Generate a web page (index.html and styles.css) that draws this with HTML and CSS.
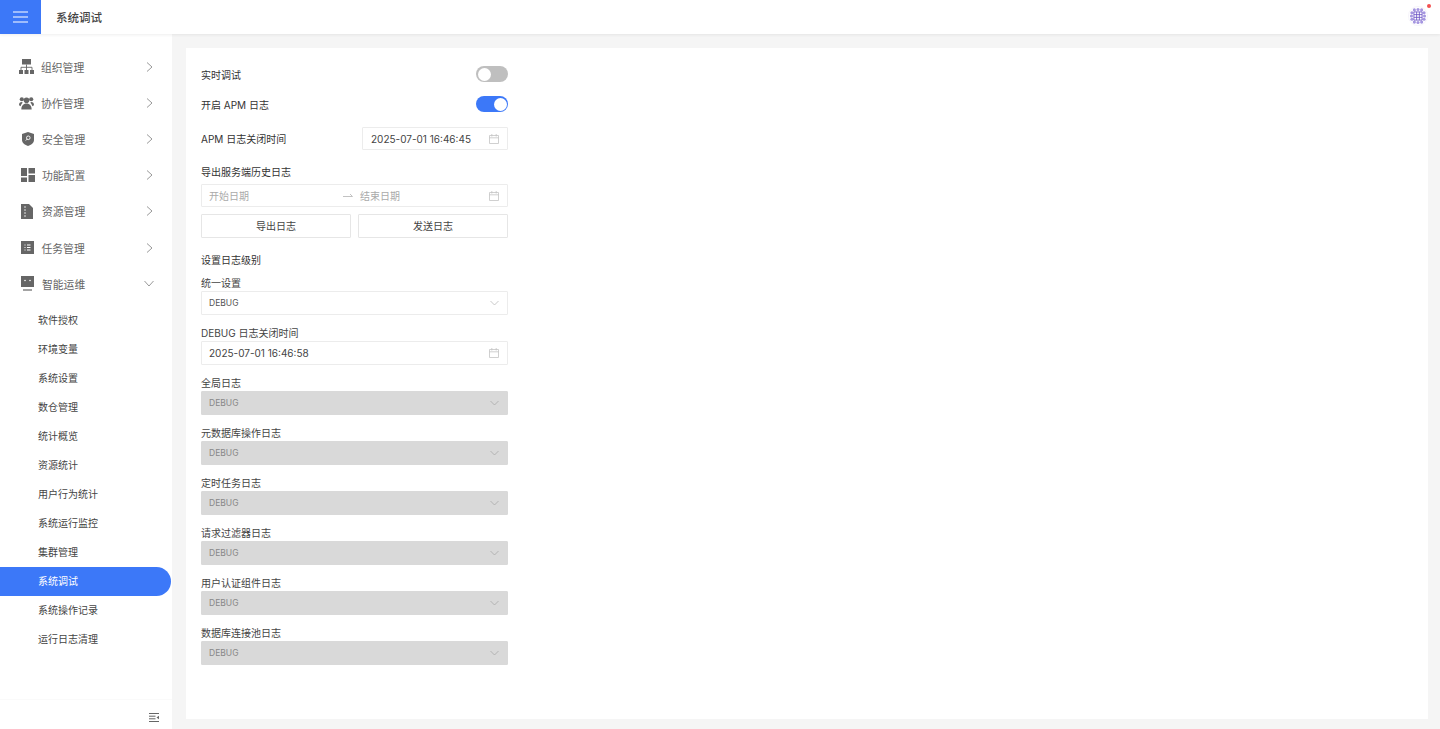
FILE: index.html
```html
<!DOCTYPE html>
<html lang="zh-CN">
<head>
<meta charset="utf-8">
<title>系统调试</title>
<link rel="stylesheet" href="styles.css">
</head>
<body>
<header class="topbar">
  <button class="menu-btn" aria-label="菜单"><svg width="15" height="12" viewBox="0 0 15 12"><path d="M0 1h15M0 6h15M0 11h15" stroke="#fff" stroke-width="1.200"/></svg></button>
  <div class="page-title">系统调试</div>
  <div class="avatar">
    <svg width="20" height="20" viewBox="0 0 22 22">
      <circle cx="11" cy="11" r="10.500" fill="#fff" stroke="#eeeaf6" stroke-width=".6"/>
      <g fill="#a596e0">
        <circle cx="7" cy="4.300" r="1.700"/><circle cx="11" cy="3.800" r="1.700"/><circle cx="15" cy="4.300" r="1.700"/>
        <circle cx="7" cy="17.700" r="1.700"/><circle cx="11" cy="18.200" r="1.700"/><circle cx="15" cy="17.700" r="1.700"/>
        <circle cx="4.300" cy="7.500" r="1.700"/><circle cx="3.800" cy="11" r="1.700"/><circle cx="4.300" cy="14.500" r="1.700"/>
        <circle cx="17.700" cy="7.500" r="1.700"/><circle cx="18.200" cy="11" r="1.700"/><circle cx="17.700" cy="14.500" r="1.700"/>
      </g>
      <path d="M6.500 6.500h9v9h-9z" fill="#fff"/>
      <path d="M6.500 6.500h9v9h-9zM9.500 6.500v9M12.500 6.500v9M6.500 9.500h9M6.500 12.500h9" fill="none" stroke="#6a52c4" stroke-width=".9"/>
    </svg>
    <span class="dot"></span>
  </div>
</header>
<div class="layout">
  <aside class="sidebar">
    <nav class="nav">
      <div class="nav-item"><svg class="ico" width="15" height="15" viewBox="0 0 15 15"><path d="M3 0h9v5.500H3zM0 11h4v4H0zM5.500 11h4v4h-4zM11 11h4v4h-4z" fill="#666"/><path d="M7.500 5.500V11M2 11V8.300h11V11" fill="none" stroke="#666" stroke-width=".9"/></svg><span>组织管理</span><svg class="chev" width="7" height="10" viewBox="0 0 7 10"><path d="M1 .5 6 5 1 9.500" fill="none" stroke="#999"/></svg></div>
      <div class="nav-item"><svg class="ico" width="15" height="14" viewBox="0 0 16 14"><circle cx="8" cy="4" r="3" fill="#666"/><circle cx="3" cy="3" r="2.200" fill="#666"/><circle cx="13" cy="3" r="2.200" fill="#666"/><path d="M2.500 14c0-4 2-6.500 5.500-6.500s5.500 2.500 5.500 6.500zM0 9.500C0 7 1 6 3 6l1 .8C2.700 8 2 9 1.800 10.500zM16 9.500C16 7 15 6 13 6l-1 .8c1.300 1.200 2 2.200 2.200 3.700z" fill="#666"/></svg><span>协作管理</span><svg class="chev" width="7" height="10" viewBox="0 0 7 10"><path d="M1 .5 6 5 1 9.500" fill="none" stroke="#999"/></svg></div>
      <div class="nav-item"><svg class="ico ico-shield" width="12" height="14" viewBox="0 0 12 14"><path d="M6 0 12 2v6c0 3-3 5-6 6-3-1-6-3-6-6V2z" fill="#666"/><circle cx="6.300" cy="5.800" r="1.800" fill="none" stroke="#fff" stroke-width=".9"/><path d="M5 7.200 3.800 8.500" stroke="#fff"/></svg><span>安全管理</span><svg class="chev" width="7" height="10" viewBox="0 0 7 10"><path d="M1 .5 6 5 1 9.500" fill="none" stroke="#999"/></svg></div>
      <div class="nav-item"><svg class="ico ico-grid" width="14" height="14" viewBox="0 0 14 14"><path d="M0 0h6v8H0zM7.500 0H14v5.500H7.500zM0 9.500h6V14H0zM7.500 7H14v7H7.500z" fill="#666"/></svg><span>功能配置</span><svg class="chev" width="7" height="10" viewBox="0 0 7 10"><path d="M1 .5 6 5 1 9.500" fill="none" stroke="#999"/></svg></div>
      <div class="nav-item"><svg class="ico ico-file" width="12" height="15" viewBox="0 0 12 15"><path d="M0 0h8l4 4v11H0z" fill="#666"/><path d="M3 3h2M3 6h2M3 9h2M3 12h2" stroke="#fff" stroke-width=".8"/></svg><span>资源管理</span><svg class="chev" width="7" height="10" viewBox="0 0 7 10"><path d="M1 .5 6 5 1 9.500" fill="none" stroke="#999"/></svg></div>
      <div class="nav-item"><svg class="ico ico-task" width="13" height="13" viewBox="0 0 13 13"><path d="M0 0h13v13H0z" fill="#666"/><path d="M3.500 4h1M3.500 6.500h1M3.500 9h1M6 4h3.500M6 6.500h3.500M6 9h3.500" stroke="#fff"/></svg><span>任务管理</span><svg class="chev" width="7" height="10" viewBox="0 0 7 10"><path d="M1 .5 6 5 1 9.500" fill="none" stroke="#999"/></svg></div>
      <div class="nav-item"><svg class="ico ico-bot" width="13" height="15" viewBox="0 0 13 15"><path d="M0 0h13v11H0z" fill="#666"/><path d="M2 14h9" stroke="#666" stroke-width="1.200"/><circle cx="4" cy="4.500" r=".8" fill="#fff"/><circle cx="9" cy="4.500" r=".8" fill="#fff"/></svg><span>智能运维</span><svg class="chev chev-d" width="10" height="7" viewBox="0 0 10 7"><path d="M.5 1 5 6 9.500 1" fill="none" stroke="#999"/></svg></div>
      <ul class="sub">
        <li>软件授权</li>
        <li>环境变量</li>
        <li>系统设置</li>
        <li>数仓管理</li>
        <li>统计概览</li>
        <li>资源统计</li>
        <li>用户行为统计</li>
        <li>系统运行监控</li>
        <li>集群管理</li>
        <li class="active">系统调试</li>
        <li>系统操作记录</li>
        <li>运行日志清理</li>
      </ul>
    </nav>
    <div class="side-foot"><svg width="10" height="9" viewBox="0 0 10 9"><path d="M0 .5h10M0 3.200h6.500M0 5.800h6.500M0 8.500h10" stroke="#666"/><path d="M10 2.800v3.400L7.500 4.500z" fill="#666"/></svg></div>
  </aside>
  <main class="main">
    <section class="card">
      <div class="form">
        <div class="row row-switch"><span>实时调试</span><span class="switch"><i></i></span></div>
        <div class="row row-switch row-apm"><span>开启 APM 日志</span><span class="switch on"><i></i></span></div>
        <div class="row row-date"><span>APM 日志关闭时间</span>
          <div class="field field-short"><span class="val">2025-07-01 16:46:45</span><svg class="cal" width="10" height="10" viewBox="0 0 10 10"><path d="M.5 1.500h9v8h-9zM.5 3.800h9M2.800 0v2.500M7.200 0v2.500" fill="none" stroke="#c4c4c4" stroke-width=".8"/></svg></div>
        </div>
        <div class="title title-export">导出服务端历史日志</div>
        <div class="field range"><span class="ph ph-a">开始日期</span><svg class="arrow" width="10" height="6" viewBox="0 0 10 6"><path d="M0 3.500h9.500L7 1" fill="none" stroke="#bbb" stroke-width=".9"/></svg><span class="ph ph-b">结束日期</span><svg class="cal" width="10" height="10" viewBox="0 0 10 10"><path d="M.5 1.500h9v8h-9zM.5 3.800h9M2.800 0v2.500M7.200 0v2.500" fill="none" stroke="#c4c4c4" stroke-width=".8"/></svg></div>
        <div class="btns"><button class="btn">导出日志</button><button class="btn">发送日志</button></div>
        <div class="title title-level">设置日志级别</div>
        <div class="label label-first">统一设置</div>
        <div class="field select"><span>DEBUG</span><svg class="caret" width="9" height="6" viewBox="0 0 9 6"><path d="M.5 1 4.500 5 8.500 1" fill="none" stroke="#bbb" stroke-width=".8"/></svg></div>
        <div class="label">DEBUG 日志关闭时间</div>
        <div class="field date-full"><span class="val">2025-07-01 16:46:58</span><svg class="cal" width="10" height="10" viewBox="0 0 10 10"><path d="M.5 1.500h9v8h-9zM.5 3.800h9M2.800 0v2.500M7.200 0v2.500" fill="none" stroke="#c4c4c4" stroke-width=".8"/></svg></div>
        <div class="label">全局日志</div>
        <div class="field select disabled"><span>DEBUG</span><svg class="caret" width="9" height="6" viewBox="0 0 9 6"><path d="M.5 1 4.500 5 8.500 1" fill="none" stroke="#aaa" stroke-width=".8"/></svg></div>
        <div class="label">元数据库操作日志</div>
        <div class="field select disabled"><span>DEBUG</span><svg class="caret" width="9" height="6" viewBox="0 0 9 6"><path d="M.5 1 4.500 5 8.500 1" fill="none" stroke="#aaa" stroke-width=".8"/></svg></div>
        <div class="label">定时任务日志</div>
        <div class="field select disabled"><span>DEBUG</span><svg class="caret" width="9" height="6" viewBox="0 0 9 6"><path d="M.5 1 4.500 5 8.500 1" fill="none" stroke="#aaa" stroke-width=".8"/></svg></div>
        <div class="label">请求过滤器日志</div>
        <div class="field select disabled"><span>DEBUG</span><svg class="caret" width="9" height="6" viewBox="0 0 9 6"><path d="M.5 1 4.500 5 8.500 1" fill="none" stroke="#aaa" stroke-width=".8"/></svg></div>
        <div class="label">用户认证组件日志</div>
        <div class="field select disabled"><span>DEBUG</span><svg class="caret" width="9" height="6" viewBox="0 0 9 6"><path d="M.5 1 4.500 5 8.500 1" fill="none" stroke="#aaa" stroke-width=".8"/></svg></div>
        <div class="label">数据库连接池日志</div>
        <div class="field select disabled"><span>DEBUG</span><svg class="caret" width="9" height="6" viewBox="0 0 9 6"><path d="M.5 1 4.500 5 8.500 1" fill="none" stroke="#aaa" stroke-width=".8"/></svg></div>
      </div>
    </section>
  </main>
</div>
</body>
</html>
```
FILE: styles.css
```css
* { box-sizing: border-box; }
html, body { margin: 0; height: 100%; overflow: hidden; }
body {
  height: 729px;
  display: flex;
  flex-direction: column;
  font-family: Inter, "Noto Sans CJK SC", sans-serif;
  font-size: 10px;
  color: #333;
  background: #f5f5f5;
}
.topbar {
  flex: 0 0 34px;
  display: flex;
  align-items: center;
  background: #fff;
  box-shadow: 0 1px 3px rgba(0, 0, 0, .07);
  position: relative;
  z-index: 2;
}
.menu-btn {
  width: 41px;
  height: 34px;
  border: 0;
  padding: 0 1px 0 0;
  background: #3c78f8;
  display: flex;
  align-items: center;
  justify-content: center;
}
.page-title {
  margin-left: 15px;
  font-size: 11.500px;
  font-weight: 500;
  color: #444;
}
.avatar {
  margin-left: auto;
  margin-right: 12px;
  margin-bottom: 3px;
  width: 20px;
  height: 20px;
  position: relative;
}
.avatar svg { display: block; }
.dot {
  position: absolute;
  right: -3px;
  top: -2px;
  width: 4px;
  height: 4px;
  border-radius: 50%;
  background: #f25050;
}
.layout { flex: 1; display: flex; min-height: 0; }
.sidebar {
  flex: 0 0 172px;
  background: #fff;
  display: flex;
  flex-direction: column;
}
.nav { flex: 1; padding-top: 14.500px; }
.nav-item {
  height: 36.200px;
  display: flex;
  align-items: center;
  padding-left: 19px;
  padding-right: 18px;
  font-size: 10.800px;
  color: #666;
}
.ico { flex: 0 0 auto; margin-right: 7px; }
.ico-shield { margin-left: 2.500px; margin-right: 8.500px; }
.ico-grid { margin-left: 2px; margin-right: 7px; }
.ico-file { margin-left: 1.500px; margin-right: 9.500px; }
.ico-task { margin-left: 1.500px; margin-right: 8px; }
.ico-bot { margin-left: 1.500px; margin-right: 8.500px; }
.chev { margin-left: auto; margin-right: 1px; }
.chev-d { margin-right: 0; }
.sub { list-style: none; margin: 0; padding: 4.500px 0 0; }
.sub li {
  height: 29px;
  line-height: 29px;
  padding-left: 38px;
  font-size: 10px;
  color: #444;
}
.sub li.active {
  background: #3c78f8;
  color: #fff;
  border-radius: 0 15px 15px 0;
  margin-right: 1px;
}
.side-foot {
  flex: 0 0 30px;
  border-top: 1px solid #fafafa;
  display: flex;
  justify-content: flex-end;
  align-items: center;
  padding: 5px 13px 0 0;
}
.main { flex: 1; padding: 14px 12px 10px 14px; min-width: 0; }
.card { height: 100%; background: #fff; padding: 18px 15px 0; }
.form { width: 307px; }
.row {
  display: flex;
  align-items: center;
  justify-content: space-between;
  color: #333;
}
.row-switch { height: 16px; }
.row-apm { margin-top: 14px; }
.row-date { margin-top: 15px; height: 23px; }
.switch {
  width: 32px;
  height: 16px;
  border-radius: 8px;
  background: #bfbfbf;
  position: relative;
  display: block;
}
.switch i {
  position: absolute;
  left: 1.500px;
  top: 1.500px;
  width: 13px;
  height: 13px;
  border-radius: 50%;
  background: #fff;
}
.switch.on { background: #3c78f8; }
.switch.on i { left: 17.500px; }
.field {
  display: flex;
  align-items: center;
  background: #fff;
  border: 1px solid #ececec;
  border-radius: 1px;
}
.field-short { width: 146px; height: 23px; padding-left: 8px; }
.val { font-size: 10px; color: #444; }
.cal { margin-left: auto; margin-right: 8px; }
.title { color: #333; line-height: 14px; }
.title-export { margin-top: 15px; }
.range { margin-top: 5px; height: 23px; padding-left: 7px; }
.ph { color: #aaa; }
.ph-a { width: 134px; }
.ph-b { margin-left: 7px; }
.arrow { flex: 0 0 auto; }
.btns { display: grid; grid-template-columns: 150px 150px; gap: 7px; margin-top: 7px; }
.btn {
  height: 24px;
  padding: 0 0 1px;
  background: #fff;
  border: 1px solid #e6e6e6;
  border-radius: 1px;
  font: inherit;
  color: #444;
}
.title-level { margin-top: 15px; }
.label { margin-top: 11.500px; line-height: 14px; color: #444; }
.label-first { margin-top: 9px; }
.label + .field { margin-top: 1px; }
.select {
  height: 23.500px;
  padding: 0 8px 0 7px;
  font-size: 8.500px;
  color: #555;
}
.caret { margin-left: auto; }
.date-full { height: 23.500px; padding-left: 7px; }
.disabled {
  background: #d9d9d9;
  border-color: #d9d9d9;
  color: #888;
}
```
